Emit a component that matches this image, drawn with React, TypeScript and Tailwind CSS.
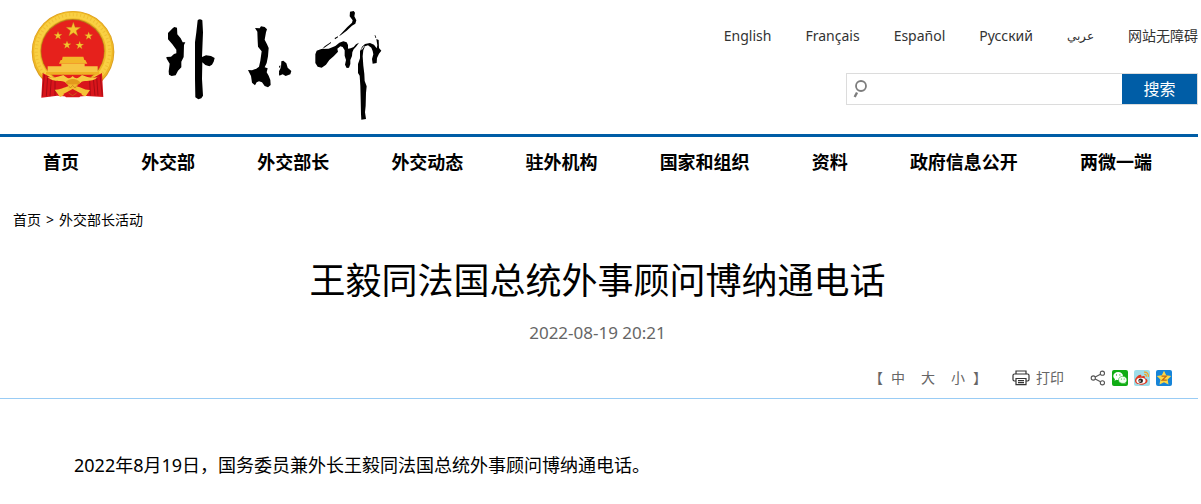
import React from 'react';

const languages = [
  { label: 'English', lang: 'en', size: 'text-sm' },
  { label: 'Français', lang: 'fr', size: 'text-sm' },
  { label: 'Español', lang: 'es', size: 'text-sm' },
  { label: 'Русский', lang: 'ru', size: 'text-sm' },
  { label: 'عربي', lang: 'ar', size: 'text-xs' },
  { label: '网站无障碍', lang: 'zh', size: 'text-sm' },
];

const navItems = ['首页', '外交部', '外交部长', '外交动态', '驻外机构', '国家和组织', '资料', '政府信息公开', '两微一端'];

const STAR = 'M0 -10 L2.4 -3.2 L9.6 -3.1 L3.8 1.3 L5.9 8.2 L0 4 L-5.9 8.2 L-3.8 1.3 L-9.6 -3.1 L-2.4 -3.2 Z';

const Emblem = () => (
  <svg viewBox="33 27 252 270" className="w-[84px] h-[90px] shrink-0" role="img" aria-label="国徽">
    <ellipse cx="159" cy="153" rx="124" ry="123" fill="#d99a1c" />
    <ellipse cx="159" cy="152" rx="122" ry="121" fill="#eeb725" />
    <circle cx="159" cy="151" r="108" fill="none" stroke="#f9d043" strokeWidth="17" />
    <circle cx="159" cy="151" r="110" fill="none" stroke="#e2a41d" strokeWidth="9" strokeDasharray="3 8" opacity=".4" />
    <circle cx="158" cy="150" r="96" fill="#b8791a" />
    <circle cx="158" cy="151" r="94" fill="#e6211c" />
    <g fill="#f6c52f" stroke="#b96a12" strokeWidth=".5">
      <path d={STAR} transform="translate(160 86) scale(2.3)" />
      <path d={STAR} transform="translate(114 104) scale(1.3)" />
      <path d={STAR} transform="translate(206 105) scale(1.3)" />
      <path d={STAR} transform="translate(141 132) scale(1.3)" />
      <path d={STAR} transform="translate(179 133) scale(1.3)" />
    </g>
    <path d="M128 167h62l3 10h-67zM122 177h74l6 11h-85z" fill="#f3b72a" />
    <path d="M124 188h70v8h-70zM83 196h150v20H83z" fill="#f6c644" />
    <path d="M78 213h160v8H78z" fill="#efb025" />
    <path d="M68 216l28 15 34-10 28 22 30-22 30 10 28-15 4 72-52-3-40 3-46-4-48 6z" fill="#d9151b" />
    <path d="M73 222l-6 64M83 226l-4 60M94 232l-4 54M105 236v48M240 222l7 62M230 227l4 57M220 232l5 52M209 236l2 48" stroke="#8e0710" strokeWidth="2" fill="none" />
    <path d="M82 228c22 4 37-2 48-6 12 10 18 14 28 3 10 11 17 7 28-3 14 6 28 10 47 7-18 16-36 8-48 13-8 8-15 10-26 6-12 4-18 1-26-6-14-4-31 3-51-14z" fill="#f7ca42" />
    <path d="M136 244c14-13 31-13 45 0l-10 12c-8-6-18-6-25 0z" fill="#e3991c" />
    <path d="M104 266c24 1 30-12 54-11 23-1 30 12 52 12l-13 19c-12-2-18-13-39-14-20 1-27 12-38 16z" fill="#f5c338" />
    <path d="M144 250h27v22h-27z" fill="#f4bb30" />
    <path d="M130 279l28-15 28 15-8 10h-40z" fill="#d9151b" />
    <path d="M145 253l6 8 7-8 7 8 6-8M146 276l12 8 12-8" stroke="#c17b15" strokeWidth="2" fill="none" />
  </svg>
);

// Brush lettering of the ministry's name
const Wordmark = () => (
  <svg viewBox="45 33 654 333" className="w-[218px] h-[111px] shrink-0" role="img" aria-label="外交部">
    <path d="M54 102L68 88 73 84 81 86 82 106 92 118 98 130 106 130 102 138 101 174 94 188 94 205 84 215 77 229 65 231 57 227 56 217 59 194 50 179 49 174 63 173 72 165 79 163 79 152 67 136 54 121z" />
    <path d="M143 64Q149 57 157 64L159 100 156 174 168 169 183 171 194 177 191 188 186 197 178 202 166 198 157 190 156 240 159 290 154 298 145 301 136 295 135 240 135 130 139 100z" />
    <path d="M315 87L329 88 333 82 344 84 351 91 348 100 344 122 351 136 356 147 354 172 350 192 344 205 353 208 350 220 356 230 361 243 362 258 354 265 344 261 336 250 327 247 320 250 315 259 306 251 303 231 294 213 306 214 319 209 327 203 331 185 335 157 324 143 323 125 322 98z" />
    <path d="M387 202l4-3v7h-3zM387 221l3-5v11h-3zM394 187L400 185 409 193 413 206 424 216 421 226 407 231 398 226 388 230 387 217 393 205z" />
    <path d="M600 38L611 36 615 41 613 52 619 64 616 74 606 80 590 95 572 109 567 111 592 84 606 71 608 64 599 52z" />
    <path d="M554 117l10-5v3l-9 6zM516 151l8-9 19-13v3l-18 13z" />
    <path d="M496 166L500 155 514 150 536 149 556 141 568 131 580 127 590 130 594 138 594 149 602 148 611 144 618 136 627 131 618 143 611 151 607 160 606 171 601 183 601 195 597 206 590 207 585 197 588 183 584 170 584 154 578 144 571 142 562 149 564 158 551 172 538 183 528 197 515 206 503 203 496 192z" />
    <path d="M565 154l8-5-5 8zM571 158l5-8 1 3z" fill="#fff" />
    <path d="M630 157L636 143 645 135 660 132 672 137 680 148 682 139 679 120 686 123 687 147 694 155 687 164 681 177 680 192 668 194 666 180 670 166 668 156 664 146 654 139 645 142 640 154 638 172 640 200 643 225 644 246 650 262 648 282 647 320 645 340 648 360 634 362 633 346 632 300 631 260 629 230 624 222 624 195 630 178z" />
    <path d="M670 108l6 1 3 8-3-1-2-7z" />
    <path d="M633 151l9-11 2 1-8 11z" fill="#fff" />
  </svg>
);

const SearchIcon = () => (
  <svg viewBox="0 0 16 18" className="w-4 h-[18px] ml-[6px] shrink-0" fill="none" stroke="#7d7d7d" aria-hidden="true">
    <circle cx="8" cy="6" r="5" strokeWidth="1.8" />
    <path d="M4 12.500L1.700 17" strokeWidth="2.4" />
  </svg>
);

const PrinterIcon = () => (
  <svg viewBox="0 0 18 16" className="w-[18px] h-4" fill="none" stroke="#333" strokeWidth="1.2" aria-hidden="true">
    <path d="M4 4V1h10v3M4 11H2.400Q1 11 1 9.600V5.400Q1 4 2.400 4h13.200Q17 4 17 5.400v4.200q0 1.400-1.400 1.400H14" />
    <path d="M4 8.500h10v6.200H4zM6 10.700h6M6 12.700h6" />
  </svg>
);

const ShareIcon = () => (
  <svg viewBox="0 0 16 16" className="w-4 h-4" fill="none" stroke="#555" strokeWidth="1.1" aria-hidden="true">
    <circle cx="3.3" cy="8" r="2.1" />
    <circle cx="12.4" cy="3.2" r="2.1" />
    <circle cx="12.4" cy="12.8" r="2.1" />
    <path d="M5.2 7l5.3-2.8M5.2 9l5.3 2.8" />
  </svg>
);

const WechatIcon = () => (
  <svg viewBox="0 0 16 16" className="w-4 h-4" aria-hidden="true">
    <rect width="16" height="16" rx="2" fill="#10ac14" />
    <path d="M6.2 2C3.4 2 1.3 3.7 1.3 6c0 1.3.7 2.3 1.7 3l-.5 1.7 2-1q.8.2 1.7.2C9 9.9 11 8.2 11 6S9 2 6.2 2z" fill="#fff" />
    <path d="M10.8 6.3c-2.500 0-4.300 1.600-4.300 3.600s1.800 3.500 4.300 3.500q.7 0 1.400-.2l1.600.9-.4-1.500c1-.7 1.500-1.600 1.500-2.700 0-2-1.800-3.600-4.100-3.600z" fill="#f1fff0" stroke="#10ac14" strokeWidth=".5" />
    <g fill="#10ac14">
      <circle cx="4.5" cy="4.9" r=".6" />
      <circle cx="7.9" cy="4.9" r=".6" />
      <circle cx="9.4" cy="8.9" r=".5" />
      <circle cx="12.2" cy="8.9" r=".5" />
    </g>
  </svg>
);

const WeiboIcon = () => (
  <svg viewBox="0 0 16 16" className="w-4 h-4" aria-hidden="true">
    <rect width="16" height="16" rx="2" fill="#9fdde9" />
    <path d="M1 10.5C1 8 4.5 4.500 6.500 4.700c1 .1 1 1 .8 1.800 1.500-.7 3.500-.8 3.700.5 0 .5-.2.9-.3 1.200 1.300.3 2.800 1 2.800 2.500 0 2.300-3 4-6.500 4S1 13 1 10.500z" fill="#e0371f" />
    <ellipse cx="7" cy="10.7" rx="4.600" ry="3" fill="#fff" />
    <circle cx="6.7" cy="10.7" r="2.3" fill="#222" />
    <circle cx="6" cy="11.1" r=".8" fill="#fff" />
    <path d="M10 2.200c2.900-.5 5 1.900 4.300 4.700M10.300 4.500c1.500-.2 2.300.8 2 2.100" fill="none" stroke="#f0a321" strokeWidth="1.2" />
  </svg>
);

const QzoneIcon = () => (
  <svg viewBox="0 0 16 16" className="w-4 h-4" aria-hidden="true">
    <rect width="16" height="16" rx="2" fill="#1684d8" />
    <path d="M8 .8l2.200 4.500 5 .7-3.600 3.500.9 5L8 12.200l-4.500 2.300.9-5L.8 6l5-.7z" fill="#fdd745" />
    <path d="M5.500 6.200h4.800L6.200 10.200h4.600" fill="none" stroke="#c06a13" strokeWidth="1.2" />
  </svg>
);

const shareLinks = [
  { label: '分享', Icon: ShareIcon },
  { label: '微信', Icon: WechatIcon },
  { label: '微博', Icon: WeiboIcon },
  { label: 'QQ空间', Icon: QzoneIcon },
];

const App: React.FC = () => {
  return (
    <div className="bg-white text-black font-['Noto_Sans','Noto_Sans_CJK_SC',sans-serif] pr-[3px]">
      <header className="flex items-start justify-between h-[137px] border-b-[3px] border-[#005da6]">
        <a href="#" className="flex items-start gap-[50px] pl-[31px] pt-[10px]">
          <Emblem />
          <Wordmark />
        </a>

        <div className="flex flex-col items-end pt-[26px]">
          <div className="flex items-center gap-[34px] text-[#333] whitespace-nowrap">
            {languages.map(({ label, lang, size }) => (
              <a key={lang} href="#" lang={lang} className={size}>{label}</a>
            ))}
          </div>
          <form className="flex items-stretch w-[352px] h-8 mt-[27px] border border-[#dcdcdc]">
            <label htmlFor="keyword" className="flex items-center" aria-label="搜索">
              <SearchIcon />
            </label>
            <input id="keyword" type="text" className="flex-1 min-w-0 px-2 text-sm outline-none" />
            <button type="button" className="w-[75px] bg-[#005da6] text-white text-base">搜索</button>
          </form>
        </div>
      </header>

      <nav className="flex justify-between items-center h-[50px] pl-[43px] pr-[46px] text-lg font-bold whitespace-nowrap">
        {navItems.map((item) => (
          <a key={item} href="#">{item}</a>
        ))}
      </nav>

      <div className="flex gap-[5px] mt-[23px] pl-[13px] text-sm">
        <a href="#">首页</a>
        <span>&gt;</span>
        <a href="#">外交部长活动</a>
      </div>

      <main>
        <div className="mt-[26px] pr-[3px] text-center">
          <h1 className="text-4xl leading-[50px]">王毅同法国总统外事顾问博纳通电话</h1>
          <p className="mt-[15px] text-[17px] leading-6 text-[#666]">2022-08-19 20:21</p>
        </div>

        <div className="flex justify-end items-center h-[42px] mt-3 pr-[26px] border-b border-[#99ccf5] text-sm text-[#666]">
          <div className="flex items-center">
            <span>【</span>
            <div className="flex gap-4 px-2">
              <button type="button">中</button>
              <button type="button">大</button>
              <button type="button">小</button>
            </div>
            <span>】</span>
          </div>
          <button type="button" className="flex items-center gap-[6px] ml-[25px]">
            <PrinterIcon />
            打印
          </button>
          <div className="flex items-center gap-[6px] ml-[26px]">
            {shareLinks.map(({ label, Icon }) => (
              <a key={label} href="#" aria-label={label}>
                <Icon />
              </a>
            ))}
          </div>
        </div>

        <article className="mt-[48px] px-[38px] text-lg leading-9">
          <p className="indent-9">2022年8月19日，国务委员兼外长王毅同法国总统外事顾问博纳通电话。</p>
        </article>
      </main>
    </div>
  );
};

export default App;
